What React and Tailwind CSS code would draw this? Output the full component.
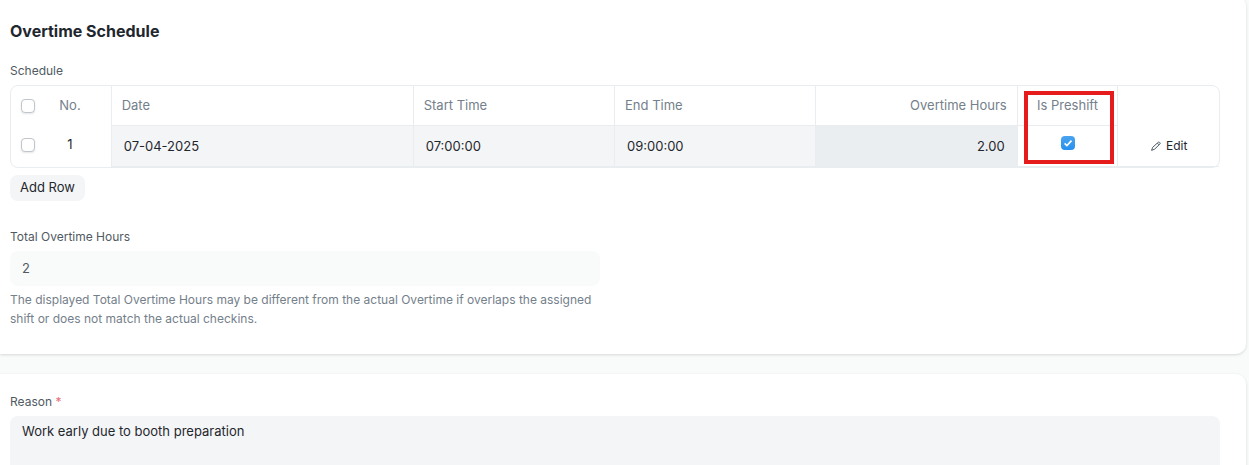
import { useState } from 'react';

const columns = [
  { key: 'date', label: 'Date' },
  { key: 'start', label: 'Start Time' },
  { key: 'end', label: 'End Time' },
];

const initialRow = { date: '07-04-2025', start: '07:00:00', end: '09:00:00', hours: '2.00', preshift: true };

const boxClass =
  'block size-3.5 shrink-0 appearance-none rounded-[4px] border border-[#c0c6cc] bg-white shadow-[0_1px_2px_rgba(0,0,0,0.1)]';

function PencilIcon() {
  return (
    <svg width="12" height="12" viewBox="0 0 12 12" fill="none" stroke="#4c5a67" strokeLinejoin="round">
      <path d="M7.3 3.1 8.2 2.3c.4-.4.9-.4 1.3 0l.4.4c.4.4.4.9 0 1.3L4.7 9.1 1.6 10.4 2.6 7.4 7.3 3.1Z" />
      <path d="m7.3 3.1 1.8 1.8" />
    </svg>
  );
}

export default function App() {
  const [row, setRow] = useState(initialRow);
  const [reason, setReason] = useState('Work early due to booth preparation');

  return (
    <div className="h-screen overflow-hidden bg-[#f9fafa] pr-[3px] font-['Inter',sans-serif] text-[13px] text-[#1f272e]">
      {/* Overtime schedule */}
      <section className="-mt-1 rounded-r-[10px] bg-white pt-[23px] pr-[26px] pb-[26px] pl-2.5 shadow-[0_1px_3px_rgba(0,0,0,0.14)]">
        <h2 className="text-base leading-6 font-bold">Overtime Schedule</h2>

        <div className="mt-[19px] mb-[5px] text-xs leading-[18px] text-[#505a62]" id="schedule-label">Schedule</div>
        <div className="rounded-lg border border-[#e9edf0] bg-white">
          <table aria-labelledby="schedule-label" className="w-full table-fixed border-separate border-spacing-0">
            <thead>
              <tr className="h-10 text-left text-[#74808b] [&>th]:font-normal">
                <th className="w-[100px] border-r border-[#e9edf0] px-2.5">
                  <div className="flex items-center">
                    <input type="checkbox" aria-label="Select all rows" className={boxClass} />
                    <span className="ml-6 w-[22px] text-center">No.</span>
                  </div>
                </th>
                <th className="w-1/4 border-r border-b border-[#e9edf0] px-2.5">Date</th>
                <th className="w-1/6 border-r border-b border-[#e9edf0] px-2.5">Start Time</th>
                <th className="w-1/6 border-r border-b border-[#e9edf0] px-2.5">End Time</th>
                <th className="w-1/6 border-r border-b border-[#e9edf0] px-2.5 text-right">Overtime Hours</th>
                <th className="relative w-1/12 border-r border-b border-[#e9edf0] text-center whitespace-nowrap">
                  Is Preshift
                  <span className="pointer-events-none absolute top-[5px] right-[3px] left-1.5 z-10 h-[73px] border-4 border-[#e61c1c]" />
                </th>
                <th className="w-1/12" aria-label="Actions" />
              </tr>
            </thead>
            <tbody>
              <tr className="h-[41px]">
                <td className="border-r border-[#e9edf0] px-2.5 pb-1">
                  <div className="flex items-center">
                    <input type="checkbox" aria-label="Select row 1" className={boxClass} />
                    <span className="ml-6 w-[22px] text-center">1</span>
                  </div>
                </td>
                {columns.map((col) => (
                  <td key={col.key} className="border-r border-b border-[#e9edf0] bg-[#f4f5f6]">
                    <input
                      type="text"
                      aria-label={col.label}
                      value={row[col.key]}
                      onChange={(e) => setRow({ ...row, [col.key]: e.target.value })}
                      className="block h-10 w-full bg-transparent px-3 outline-none"
                    />
                  </td>
                ))}
                <td className="border-r border-b border-[#e9edf0] bg-[#ebeef0] px-3 pt-0.5 text-right">{row.hours}</td>
                <td className="border-r border-b border-[#e9edf0] pb-1.5">
                  <label className="relative mx-auto block size-3.5">
                    <input
                      type="checkbox"
                      aria-label="Is Preshift"
                      checked={row.preshift}
                      onChange={(e) => setRow({ ...row, preshift: e.target.checked })}
                      className="block size-3.5 appearance-none rounded-[4px] border border-[#c0c6cc] checked:border-0 checked:bg-linear-to-b checked:from-[#4aa3ee] checked:to-[#2490ef]"
                    />
                    <svg className="pointer-events-none absolute inset-0" width="14" height="14" viewBox="0 0 14 14" fill="none" stroke="#fff" strokeWidth="1.6">
                      <path d="M3.6 7.4 5.9 9.6 10.5 4.6" />
                    </svg>
                  </label>
                </td>
                <td className="border-b border-[#e9edf0]">
                  <button type="button" className="mx-auto flex items-center gap-1 text-xs">
                    <PencilIcon />
                    Edit
                  </button>
                </td>
              </tr>
            </tbody>
          </table>
        </div>
        <button type="button" className="mt-[7px] h-[26px] rounded-lg bg-[#f4f5f6] px-2.5">Add Row</button>

        <div className="mt-[27px] w-[590px] max-w-full">
          <label htmlFor="total-hours" className="block text-xs leading-[18px] text-[#505a62]">Total Overtime Hours</label>
          <input
            id="total-hours"
            type="text"
            readOnly
            value="2"
            className="mt-[5px] block h-[35px] w-full rounded-lg bg-[#f9fafa] px-3 pb-0.5 text-[#505a62] outline-none"
          />
          <p className="mt-1 text-xs leading-[19px] text-[#74808b]">
            The displayed Total Overtime Hours may be different from the actual Overtime if overlaps the assigned shift or does not match the actual checkins.
          </p>
        </div>
      </section>

      {/* Reason */}
      <section className="mt-5 rounded-r-[10px] bg-white pt-[19px] pr-[26px] pb-6 pl-2.5 shadow-[0_1px_3px_rgba(0,0,0,0.14)]">
        <label htmlFor="reason" className="block text-xs leading-[18px] text-[#505a62]">
          Reason <span className="text-[#e86c78]">*</span>
        </label>
        <textarea
          id="reason"
          value={reason}
          onChange={(e) => setReason(e.target.value)}
          className="mt-[5px] block h-[300px] w-full resize-none rounded-lg bg-[#f4f5f6] px-3 py-[5px] leading-5 outline-none"
        />
      </section>
    </div>
  );
}
